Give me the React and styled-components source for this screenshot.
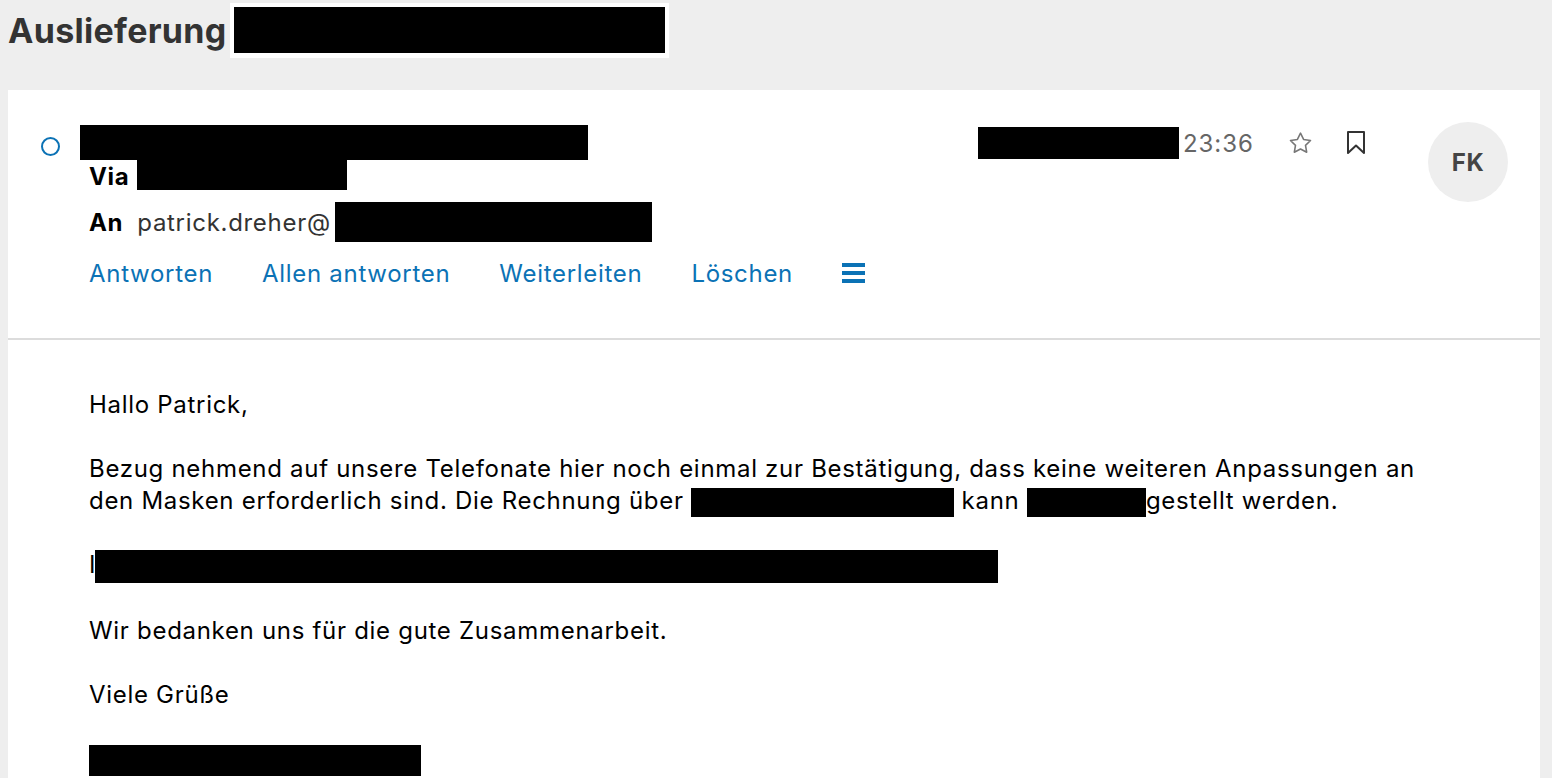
import React from 'react';
import styled, { createGlobalStyle } from 'styled-components';

const GlobalStyle = createGlobalStyle`
  body {
    margin: 0;
    background: #eeeeee;
    font-family: Inter, "Liberation Sans", Arial, sans-serif;
    letter-spacing: 0.7px;
    color: #000;
  }
`;

const Page = styled.div`
  min-height: 778px;
  background: #eeeeee;
  padding-right: 12px;
`;

const TitleBar = styled.h1`
  display: flex;
  align-items: center;
  margin: 0;
  height: 90px;
  padding: 0 0 30px 8px;
  box-sizing: border-box;
  font-size: 34px;
  font-weight: 700;
  color: #333;
  letter-spacing: 0.3px;
`;

const Redact = styled.span`
  display: inline-block;
  vertical-align: middle;
  box-sizing: border-box;
  background: #000;
  width: ${({ $w }) => $w}px;
  height: ${({ $h }) => $h}px;
  margin-left: ${({ $ml }) => $ml || 0}px;
  margin-right: ${({ $mr }) => $mr || 0}px;
  ${({ $frame }) => $frame && 'border: 4px solid #fff; border-bottom-width: 5px;'}
`;

const Card = styled.div`
  margin-left: 8px;
  background: #fff;
`;

const Header = styled.div`
  display: flex;
  align-items: flex-start;
  padding: 32px 32px 48px 0;
  border-bottom: 2px solid #dcdcdc;
`;

const Gutter = styled.div`
  width: 81px;
  flex-shrink: 0;
  display: flex;
  justify-content: center;
  padding: 15px 0 0 3px;
  box-sizing: border-box;
`;

const UnreadDot = styled.span`
  width: 19px;
  height: 19px;
  border: 2px solid #0b72b5;
  border-radius: 50%;
  box-sizing: border-box;
`;

const Main = styled.div`
  flex: 1;
  display: flex;
  flex-direction: column;
  padding-top: 3px;
`;

const Line = styled.div`
  display: flex;
  align-items: center;
  height: ${({ $h }) => $h}px;
  margin-top: ${({ $mt }) => $mt || 0}px;
  font-size: 24px;
`;

const Label = styled.span`
  font-weight: 700;
  margin-right: ${({ $mr }) => $mr}px;
`;

const Address = styled.span`
  color: #333;
`;

const Actions = styled.div`
  display: flex;
  align-items: center;
  gap: 49px;
  height: 34px;
  margin-top: 14px;
`;

const ActionLink = styled.a`
  color: #0b72b5;
  font-size: 24px;
  text-decoration: none;
  cursor: pointer;
`;

const MenuIcon = styled.span`
  display: flex;
  flex-direction: column;
  gap: 4px;
  width: 23px;
  cursor: pointer;

  & > i {
    display: block;
    height: 4px;
    background: #0b72b5;
  }
`;

const Meta = styled.div`
  display: flex;
  align-items: center;
  height: 32px;
  margin-top: 5px;
`;

const Time = styled.span`
  font-size: 24px;
  color: #666;
  margin-left: 4px;
  letter-spacing: 1px;
`;

const IconButton = styled.span`
  display: flex;
  margin-left: ${({ $ml }) => $ml}px;
`;

const Avatar = styled.div`
  width: 80px;
  height: 80px;
  border-radius: 50%;
  background: #eeeeee;
  margin-left: 62px;
  display: flex;
  align-items: center;
  justify-content: center;
  font-size: 24px;
  font-weight: 700;
  color: #444;
  flex-shrink: 0;
`;

const Body = styled.div`
  padding: 49px 90px 40px 81px;
  font-size: 24px;
  line-height: 32px;

  & p {
    margin: 0 0 32px;
  }
`;

const App = () => (
  <Page>
    <GlobalStyle />
    <TitleBar>
      Auslieferung
      <Redact $w={439} $h={55} $ml={3} $frame />
    </TitleBar>
    <Card>
      <Header>
        <Gutter>
          <UnreadDot />
        </Gutter>
        <Main>
          <Line $h={35}>
            <Redact $w={508} $h={35} $ml={-9} />
          </Line>
          <Line $h={33}>
            <Label $mr={8}>Via</Label>
            <Redact $w={210} $h={30} style={{ alignSelf: 'flex-start' }} />
          </Line>
          <Line $h={40} $mt={9}>
            <Label $mr={14}>An</Label>
            <Address>patrick.dreher@</Address>
            <Redact $w={317} $h={40} $ml={4} />
          </Line>
          <Actions>
            <ActionLink>Antworten</ActionLink>
            <ActionLink>Allen antworten</ActionLink>
            <ActionLink>Weiterleiten</ActionLink>
            <ActionLink>Löschen</ActionLink>
            <MenuIcon>
              <i />
              <i />
              <i />
            </MenuIcon>
          </Actions>
        </Main>
        <Meta>
          <Redact $w={201} $h={32} />
          <Time>23:36</Time>
          <IconButton $ml={33}>
            <svg width="27" height="27" viewBox="0 0 24 24" fill="none" stroke="#777" strokeWidth="1.4" strokeLinejoin="round">
              <path d="M12 2.8l2.75 5.6 6.15.9-4.45 4.35 1.05 6.1L12 16.85l-5.5 2.9 1.05-6.1L3.1 9.3l6.15-.9z" />
            </svg>
          </IconButton>
          <IconButton $ml={32}>
            <svg width="20" height="26" viewBox="0 0 20 26" fill="none" stroke="#333" strokeWidth="2" strokeLinejoin="round">
              <path d="M2 2h16v21l-8-7.5L2 23z" />
            </svg>
          </IconButton>
        </Meta>
        <Avatar>FK</Avatar>
      </Header>
      <Body>
        <p>Hallo Patrick,</p>
        <p>
          Bezug nehmend auf unsere Telefonate hier noch einmal zur Bestätigung, dass keine weiteren Anpassungen an
          den Masken erforderlich sind. Die Rechnung über <Redact $w={263} $h={29} /> kann{' '}
          <Redact $w={119} $h={29} />gestellt werden.
        </p>
        <p>
          I<Redact $w={903} $h={33} $ml={-1} />
        </p>
        <p>Wir bedanken uns für die gute Zusammenarbeit.</p>
        <p>Viele Grüße</p>
        <p>
          <Redact $w={332} $h={31} />
        </p>
      </Body>
    </Card>
  </Page>
);

export default App;
